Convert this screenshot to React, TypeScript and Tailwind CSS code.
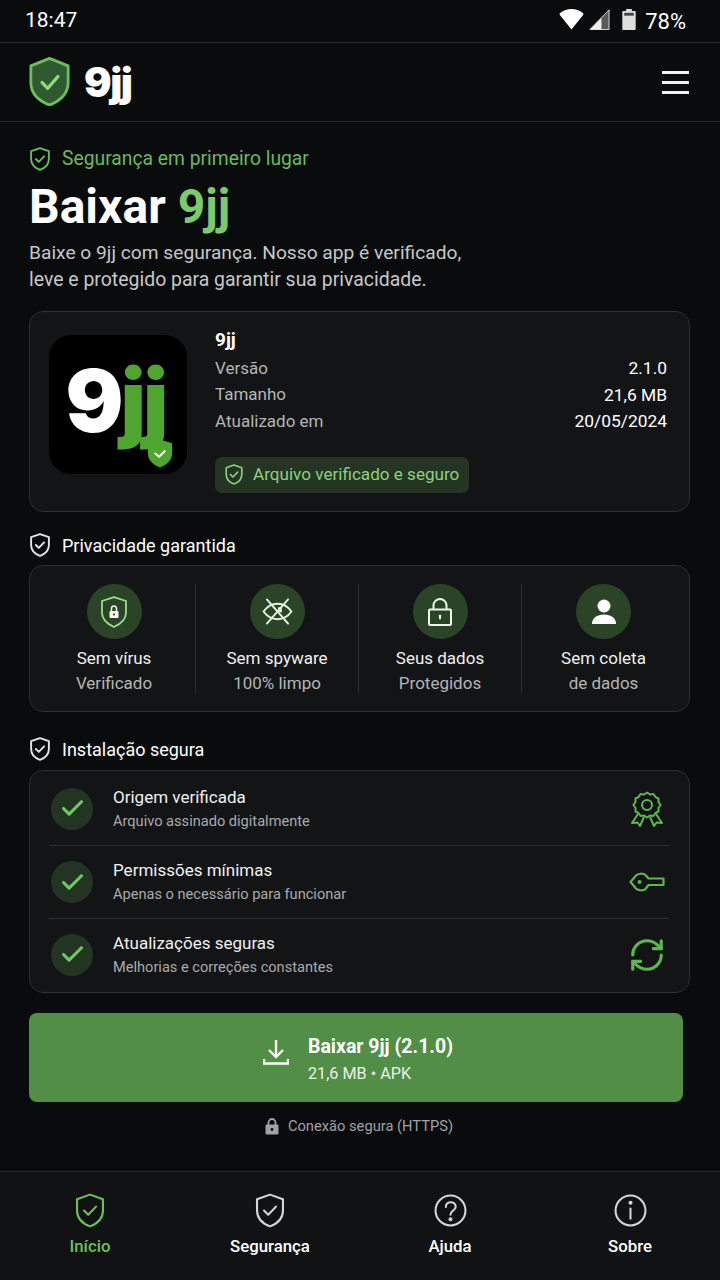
import { Check, RefreshCw } from "lucide-react";

type IconProps = {
	className?: string;
	sw?: number;
};

function ShieldCheck({ className, sw = 1.7 }: IconProps) {
	return (
		<svg viewBox="3 1.200 18 21.600" fill="none" stroke="currentColor" strokeWidth={sw} strokeLinejoin="round" strokeLinecap="round" className={className}>
			<path d="M12 2.200 20 5v7c0 4.800-3.200 8-8 9.800C7.200 20 4 16.800 4 12V5z" />
			<path d="m8.300 12 2.600 2.600 4.800-5" />
		</svg>
	);
}

function Logo() {
	return (
		<svg viewBox="0 0 44 50" preserveAspectRatio="none" className="mb-[2px] h-[49px] w-[41px]">
			<path d="M22 1.500 42 9v17c0 11-8 18.500-20 23C10 44.500 2 37 2 26V9z" fill="#2f5a30" stroke="#6cc05c" strokeWidth="3" strokeLinejoin="round" />
			<path d="m14 26 6 6 11-12" fill="none" stroke="#8fdc7c" strokeWidth="3.400" strokeLinecap="round" strokeLinejoin="round" />
		</svg>
	);
}

function AppIcon() {
	return (
		<div className="relative flex h-[139px] w-[138px] shrink-0 items-center justify-center rounded-[22px] bg-black pr-[5px] pb-[8px] font-['Inter',sans-serif] text-[86px] leading-none font-black tracking-[-3px]">
			<span className="text-white">9</span>
			<span className="text-[#4ea62e]">jj</span>
			<svg viewBox="0 0 28 32" className="absolute top-[103px] left-[98px] h-[31px] w-[26px]">
				<path d="M14 1 27 5v11c0 7-5 12-13 15C6 28 1 23 1 16V5z" fill="#4ea62e" />
				<path d="m9 16 4 3.500 6-6" fill="none" stroke="#fff" strokeWidth="2.200" strokeLinecap="round" strokeLinejoin="round" />
			</svg>
		</div>
	);
}

function EyeOff({ className }: IconProps) {
	return (
		<svg viewBox="0 0 32 28" fill="none" stroke="currentColor" strokeWidth="2" strokeLinecap="round" strokeLinejoin="round" className={className}>
			<path d="M1.500 14c4-5.500 8.500-8 14.500-8s10.500 2.500 14.500 8c-4 5.500-8.500 8-14.500 8S5.500 19.500 1.500 14z" />
			<path d="M16.500 9.500h4v5.500l-4-.5z" fill="currentColor" stroke="none" />
			<path d="M5 1.500 27 26.500M27 1.500 5 26.500" />
		</svg>
	);
}

function ShieldLock({ className }: IconProps) {
	return (
		<svg viewBox="0 0 26 32" fill="none" className={className}>
			<path d="M13 1.200 25 5v12c0 6.500-4.500 10.500-12 14C5.500 27.500 1 23.500 1 17V5z" stroke="#9be08a" strokeWidth="1.800" strokeLinejoin="round" />
			<path d="M10.500 15v-2.500a2.500 2.500 0 0 1 5 0V15" stroke="#f4f9f0" strokeWidth="1.500" />
			<rect x="8.500" y="15" width="9" height="7" rx="1" fill="#f4f9f0" />
			<circle cx="13" cy="18.500" r="1.100" fill="#2b4428" />
		</svg>
	);
}

function Padlock({ className }: IconProps) {
	return (
		<svg viewBox="0 0 24 28" fill="none" stroke="currentColor" strokeWidth="2" className={className}>
			<rect x="1" y="11.500" width="22" height="15.500" rx="1" />
			<path d="M5.500 11.500V7.500a6.500 6.500 0 0 1 13 0v4" />
			<path d="M12 18v2.500" strokeLinecap="round" strokeWidth="2" />
			<circle cx="12" cy="18" r="1.300" fill="currentColor" stroke="none" />
		</svg>
	);
}

function Person({ className }: IconProps) {
	return (
		<svg viewBox="0 0 24 25" fill="currentColor" className={className}>
			<circle cx="12" cy="7" r="6.500" />
			<path d="M0 25c0-6 5-9.500 12-9.500S24 19 24 25z" />
		</svg>
	);
}

function Medal({ className }: IconProps) {
	return (
		<svg viewBox="0 0 34 36" fill="none" stroke="currentColor" strokeWidth="2" strokeLinejoin="round" className={className}>
			<path d="M17 1.500 20 3.500 23.500 3 25.500 6 28.500 7.500 28.500 11 30.500 14 28.500 17 28.500 20.500 25.500 22 23.500 25 20 24.500 17 26.500 14 24.500 10.500 25 8.500 22 5.500 20.500 5.500 17 3.500 14 5.500 11 5.500 7.500 8.500 6 10.500 3 14 3.500z" />
			<circle cx="17" cy="14" r="5" />
			<path d="M8 23 2 32l5.500-.5L10 35l4-9M26 23l6 9-5.500-.5L24 35l-4-9" />
		</svg>
	);
}

function KeyIcon({ className }: IconProps) {
	return (
		<svg viewBox="0 0 36 22" fill="none" stroke="currentColor" strokeWidth="2.200" strokeLinejoin="round" className={className}>
			<path d="M1.500 11 7 4.500c2-2 7-2.500 9.500-.5l3 3.500H34.500V14H19.500l-3 4c-2.500 2-7.500 1.500-9.500-.5z" />
			<circle cx="10.500" cy="11" r="2" fill="currentColor" stroke="none" />
		</svg>
	);
}

function Question({ className }: IconProps) {
	return (
		<svg viewBox="0 0 32 32" fill="none" stroke="currentColor" strokeWidth="2" strokeLinecap="round" className={className}>
			<circle cx="16" cy="16" r="14.500" />
			<path d="M11.500 12.500c0-6 9.500-6 9.500 0 0 3.500-5 3.500-5 7.500" />
			<circle cx="16" cy="24.500" r="1" fill="currentColor" />
		</svg>
	);
}

function InfoIcon({ className }: IconProps) {
	return (
		<svg viewBox="0 0 32 32" fill="none" stroke="currentColor" strokeWidth="2" strokeLinecap="round" className={className}>
			<circle cx="16" cy="16" r="14.500" />
			<path d="M16 14v10" />
			<circle cx="16" cy="8.500" r="1" fill="currentColor" />
		</svg>
	);
}

const details = [
	{ label: "Versão", value: "2.1.0" },
	{ label: "Tamanho", value: "21,6 MB" },
	{ label: "Atualizado em", value: "20/05/2024" },
];

const privacy = [
	{ title: "Sem vírus", sub: "Verificado", icon: <ShieldLock className="h-[32px] w-[26px]" /> },
	{ title: "Sem spyware", sub: "100% limpo", icon: <EyeOff className="h-[27px] w-[31px] text-[#e4f3df]" /> },
	{ title: "Seus dados", sub: "Protegidos", icon: <Padlock className="h-[28px] w-[24px] text-[#eef5ea]" /> },
	{ title: "Sem coleta", sub: "de dados", icon: <Person className="h-[25px] w-[24px] text-white" /> },
];

const steps = [
	{ title: "Origem verificada", sub: "Arquivo assinado digitalmente", h: "h-[75px] pt-[1px]", icon: <Medal className="h-[36px] w-[34px]" /> },
	{ title: "Permissões mínimas", sub: "Apenas o necessário para funcionar", h: "h-[73px]", icon: <KeyIcon className="h-[22px] w-[36px]" /> },
	{ title: "Atualizações seguras", sub: "Melhorias e correções constantes", h: "h-[73px] pb-[2px]", icon: <RefreshCw className="h-[38px] w-[38px]" strokeWidth={2} /> },
];

const tabs = [
	{ label: "Início", icon: <ShieldCheck className="h-[35px] w-[30px]" sw={1.300} />, active: true },
	{ label: "Segurança", icon: <ShieldCheck className="h-[35px] w-[30px]" sw={1.300} />, active: false },
	{ label: "Ajuda", icon: <Question className="h-[33px] w-[33px]" />, active: false },
	{ label: "Sobre", icon: <InfoIcon className="h-[33px] w-[33px]" />, active: false },
];

export default function App() {
	return (
		<div className="flex h-[1280px] w-[720px] flex-col overflow-hidden bg-[#0a0b0d] font-['Roboto',sans-serif] text-white">
			<div className="flex h-[43px] shrink-0 items-center justify-between border-b border-[#26282a] pr-[34px] pl-[25px] text-[21px]">
				<span>18:47</span>
				<div className="flex items-center gap-[5px]">
					<svg viewBox="0 0 26 22" className="mb-[3px] h-[21px] w-[25px]" fill="#fff">
						<path d="M1 6.500c-.7-.8-.7-1.500 0-2.200 7-5.700 17-5.700 24 0 .7.700.7 1.400 0 2.200L13 21.500z" />
					</svg>
					<svg viewBox="0 0 22 22" className="mb-[3px] h-[21px] w-[21px]">
						<path d="M21 1v20.500H1z" fill="#5a5a5a" stroke="#dcdcdc" strokeWidth="1" />
						<path d="M13 9.500v12H1z" fill="#eee" />
					</svg>
					<svg viewBox="0 0 14 22" className="mb-[3px] ml-[7px] h-[21px] w-[14px]">
						<rect x="4" y="0" width="6" height="3" fill="#ddd" />
						<rect x="0" y="2" width="14" height="20" rx="1" fill="#ddd" />
						<rect x="2" y="4" width="10" height="3" fill="#444" />
					</svg>
					<span className="ml-[4px] text-[22px]">78%</span>
				</div>
			</div>

			<header className="flex h-[79px] shrink-0 items-center justify-between border-b border-[#26282a] pr-[31px] pl-[29px]">
				<div className="flex items-center gap-[14px]">
					<Logo />
					<span className="font-['Inter',sans-serif] text-[41px] leading-none font-black tracking-[-1.500px]">9jj</span>
				</div>
				<div className="flex w-[27px] flex-col gap-[7px]">
					<div className="h-[3px] bg-[#f2f2f2]" />
					<div className="h-[3px] bg-[#f2f2f2]" />
					<div className="h-[3px] bg-[#f2f2f2]" />
				</div>
			</header>

			<main className="flex flex-1 flex-col pt-[25px] pr-[30px] pl-[29px]">
				<div className="flex h-[24px] items-center gap-[12px] pl-[1px] text-[19.300px] text-[#68bb5b]">
					<ShieldCheck className="h-[24px] w-[20px]" />
					<span>Segurança em primeiro lugar</span>
				</div>
				<h1 className="mt-[9px] text-[48px] leading-[54px] font-bold">
					Baixar <span className="text-[#7ccb68]">9jj</span>
				</h1>
				<p className="mt-[5px] text-[19.200px] leading-[27px] text-[#c6c7c8]">
					Baixe o 9jj com segurança. Nosso app é verificado,
					<br />
					<span className="text-[19.450px]">leve e protegido para garantir sua privacidade.</span>
				</p>

				<section className="mt-[18px] flex h-[201px] gap-[28px] rounded-[14px] border border-[#2c2e30] bg-[#131416] pt-[23px] pr-[22px] pl-[19px]">
					<AppIcon />
					<div className="-mt-[10px] flex-1">
						<div className="h-[30px] text-[19px] leading-[30px] font-bold">9jj</div>
						<div className="flex flex-col">
							{details.map((d) => (
								<div key={d.label} className="flex h-[26.500px] items-center justify-between">
									<span className="text-[17px] text-[#b4b5b6]">{d.label}</span>
									<span className="text-[17.400px] text-white">{d.value}</span>
								</div>
							))}
						</div>
						<div className="mt-[22px] flex h-[36px] w-[254px] items-center gap-[10px] rounded-[7px] bg-[#243524] pl-[10px] text-[17.100px] whitespace-nowrap text-[#8fd07e]">
							<ShieldCheck className="h-[21px] w-[18px]" />
							<span>Arquivo verificado e seguro</span>
						</div>
					</div>
				</section>

				<div className="mt-[21px] flex h-[24px] items-center gap-[12px] pl-[1px] text-[18px]">
					<ShieldCheck className="h-[24px] w-[20px] text-[#e5e5e5]" />
					<span>Privacidade garantida</span>
				</div>

				<section className="mt-[8px] grid h-[147px] grid-cols-4 rounded-[14px] border border-[#2c2e30] bg-[#131416] pt-[18px] pr-[4px] pl-[3px]">
					{privacy.map((p, i) => (
						<div key={p.title} className={"flex h-[109px] flex-col items-center " + (i < 3 ? "border-r border-[#2c2e30]" : "")}>
							<div className="flex h-[55px] w-[55px] shrink-0 items-center justify-center rounded-full bg-[#2b4428]">{p.icon}</div>
							<div className="mt-[7px] shrink-0 text-[17px] leading-[25px] text-[#f0f0f0]">{p.title}</div>
							<div className="shrink-0 text-[17px] leading-[25px] text-[#b4b5b6]">{p.sub}</div>
						</div>
					))}
				</section>

				<div className="mt-[25px] flex h-[24px] items-center gap-[12px] pl-[1px] text-[18px]">
					<ShieldCheck className="h-[24px] w-[20px] text-[#e5e5e5]" />
					<span>Instalação segura</span>
				</div>

				<section className="mt-[9px] flex h-[223px] flex-col rounded-[14px] border border-[#2c2e30] bg-[#131416] pr-[20px] pl-[19px]">
					{steps.map((s, i) => (
						<div key={s.title} className={"flex items-center " + s.h + " " + (i < 2 ? "border-b border-[#2c2e30]" : "")}>
							<div className="ml-[2px] flex h-[42px] w-[42px] shrink-0 items-center justify-center rounded-full bg-[#233522]">
								<Check className="h-[27px] w-[27px] text-[#6cc95c]" strokeWidth={2.800} />
							</div>
							<div className="ml-[20px] flex-1">
								<div className="text-[17px] leading-[24px] text-[#f0f0f0]">{s.title}</div>
								<div className="text-[14.600px] leading-[24px] text-[#a9aaab]">{s.sub}</div>
							</div>
							<div className="mr-[1px] flex w-[42px] justify-center text-[#5cb84e]">{s.icon}</div>
						</div>
					))}
				</section>

				<button type="button" className="mt-[20px] flex h-[89px] w-[654px] items-center justify-center gap-[19px] rounded-[8px] bg-[#528e45] pt-[4px] pl-[4px]">
					<svg viewBox="0 0 26 25" fill="none" stroke="#fff" strokeWidth="2.400" className="-mt-[15px] h-[25px] w-[26px]">
						<path d="M13 0v17M6 10l7 7 7-7" />
						<path d="M1 19v4.500h24V19" />
					</svg>
					<div className="text-left">
						<div className="text-[19.500px] leading-[28px] font-bold">Baixar 9jj (2.1.0)</div>
						<div className="text-[16.200px] leading-[26px] text-[#e8f2e5]">21,6 MB • APK</div>
					</div>
				</button>

				<div className="mt-[13px] flex h-[22px] w-[654px] items-center justify-center gap-[9px] pl-[6px] text-[14.700px] text-[#a1a2a3]">
					<svg viewBox="0 0 14 17" className="h-[17px] w-[14px]">
						<path d="M3.500 7V4.500a3.500 3.500 0 0 1 7 0V7" fill="none" stroke="currentColor" strokeWidth="1.800" />
						<rect x="0.500" y="6.500" width="13" height="10" rx="1.200" fill="currentColor" />
						<circle cx="7" cy="11.500" r="1.400" fill="#0a0b0d" />
					</svg>
					<span>Conexão segura (HTTPS)</span>
				</div>
			</main>

			<nav className="grid h-[109px] shrink-0 grid-cols-4 border-t border-[#26282a] bg-[#111214]">
				{tabs.map((t) => (
					<div key={t.label} className={"flex flex-col items-center pt-[21px] " + (t.active ? "text-[#6cc05c]" : "text-[#d6d6d6]")}>
						<div className="flex h-[35px] items-center justify-center">{t.icon}</div>
						<span className={"mt-[6px] text-[16.800px] font-medium " + (t.active ? "text-[#6cc05c]" : "text-white")}>{t.label}</span>
					</div>
				))}
			</nav>
		</div>
	);
}
